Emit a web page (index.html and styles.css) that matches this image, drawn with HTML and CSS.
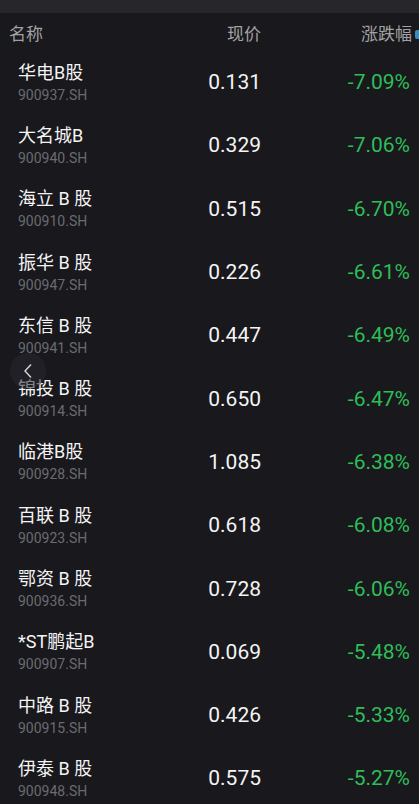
FILE: index.html
```html
<!DOCTYPE html>
<html lang="zh-CN">
<head>
<meta charset="UTF-8">
<meta name="viewport" content="width=device-width, initial-scale=1.0">
<title>B股跌幅榜</title>
<link rel="stylesheet" href="styles.css">
</head>
<body>
<div class="topbar"></div>
<div class="header">
  <span class="col-name">名称</span>
  <span class="col-price">现价</span>
  <span class="col-change">涨跌幅<i class="sort-icon"></i></span>
</div>
<div class="list">
  <div class="row"><div class="col-name"><div class="name">华电B股</div><div class="code">900937.SH</div></div><div class="col-price">0.131</div><div class="col-change down">-7.09%</div></div>
  <div class="row"><div class="col-name"><div class="name">大名城B</div><div class="code">900940.SH</div></div><div class="col-price">0.329</div><div class="col-change down">-7.06%</div></div>
  <div class="row"><div class="col-name"><div class="name">海立 B 股</div><div class="code">900910.SH</div></div><div class="col-price">0.515</div><div class="col-change down">-6.70%</div></div>
  <div class="row"><div class="col-name"><div class="name">振华 B 股</div><div class="code">900947.SH</div></div><div class="col-price">0.226</div><div class="col-change down">-6.61%</div></div>
  <div class="row"><div class="col-name"><div class="name">东信 B 股</div><div class="code">900941.SH</div></div><div class="col-price">0.447</div><div class="col-change down">-6.49%</div></div>
  <div class="row"><div class="col-name"><div class="name">锦投 B 股</div><div class="code">900914.SH</div></div><div class="col-price">0.650</div><div class="col-change down">-6.47%</div></div>
  <div class="row"><div class="col-name"><div class="name">临港B股</div><div class="code">900928.SH</div></div><div class="col-price">1.085</div><div class="col-change down">-6.38%</div></div>
  <div class="row"><div class="col-name"><div class="name">百联 B 股</div><div class="code">900923.SH</div></div><div class="col-price">0.618</div><div class="col-change down">-6.08%</div></div>
  <div class="row"><div class="col-name"><div class="name">鄂资 B 股</div><div class="code">900936.SH</div></div><div class="col-price">0.728</div><div class="col-change down">-6.06%</div></div>
  <div class="row"><div class="col-name"><div class="name">*ST鹏起B</div><div class="code">900907.SH</div></div><div class="col-price">0.069</div><div class="col-change down">-5.48%</div></div>
  <div class="row"><div class="col-name"><div class="name">中路 B 股</div><div class="code">900915.SH</div></div><div class="col-price">0.426</div><div class="col-change down">-5.33%</div></div>
  <div class="row"><div class="col-name"><div class="name">伊泰 B 股</div><div class="code">900948.SH</div></div><div class="col-price">0.575</div><div class="col-change down">-5.27%</div></div>
</div>
<button class="back-btn" aria-label="返回">
  <svg width="12" height="16" viewBox="0 0 12 16"><path d="M9 1.5 L3 8 L9 14.5" fill="none" stroke="#d8d8d8" stroke-width="1.4"/></svg>
</button>
</body>
</html>
```

FILE: styles.css
```css
body {
    margin: 0;
    padding: 0;
    background-color: #18181d;
    font-family: Roboto, "Noto Sans CJK SC", sans-serif;
    color: #f2f2f2;
    overflow: hidden;
    height: 804px;
}

.topbar {
    height: 13px;
    background-color: #27272b;
}

.header {
    display: grid;
    grid-template-columns: 1fr 120px 149px;
    align-items: center;
    height: 39px;
    padding: 0 0 0 9px;
    margin-right: -4px;
    font-size: 17px;
    color: #a2a2a2;
    overflow: hidden;
}

.header .col-price {
    text-align: right;
    padding-right: 13px;
}

.header .col-change {
    text-align: right;
    white-space: nowrap;
}

.sort-icon {
    display: inline-block;
    width: 8px;
    height: 9px;
    margin-left: 3px;
    background-color: #2f8fc9;
    border-radius: 2px;
    vertical-align: 1px;
}

.list {
    display: flex;
    flex-direction: column;
}

.row {
    display: grid;
    grid-template-columns: 1fr 120px 149px;
    align-items: center;
    height: 63.3px;
    padding: 0 9px 0 18px;
}

.name {
    font-size: 18px;
    line-height: 22px;
    color: #f4f4f4;
    white-space: nowrap;
}

.code {
    font-size: 14px;
    line-height: 22px;
    color: #6b6b6f;
}

.row .col-price {
    text-align: right;
    font-size: 21px;
    margin-top: -3px;
    color: #f4f4f4;
}

.row .col-change {
    text-align: right;
    font-size: 21px;
    margin-top: -3px;
}

.down {
    color: #2fbd58;
}

/* floating back button sits over the list */
.back-btn {
    position: absolute;
    left: 10px;
    top: 353px;
    width: 36px;
    height: 36px;
    border: none;
    border-radius: 50%;
    background-color: rgba(40, 40, 46, 0.55);
    display: flex;
    align-items: center;
    justify-content: center;
    padding: 0;
}
```
